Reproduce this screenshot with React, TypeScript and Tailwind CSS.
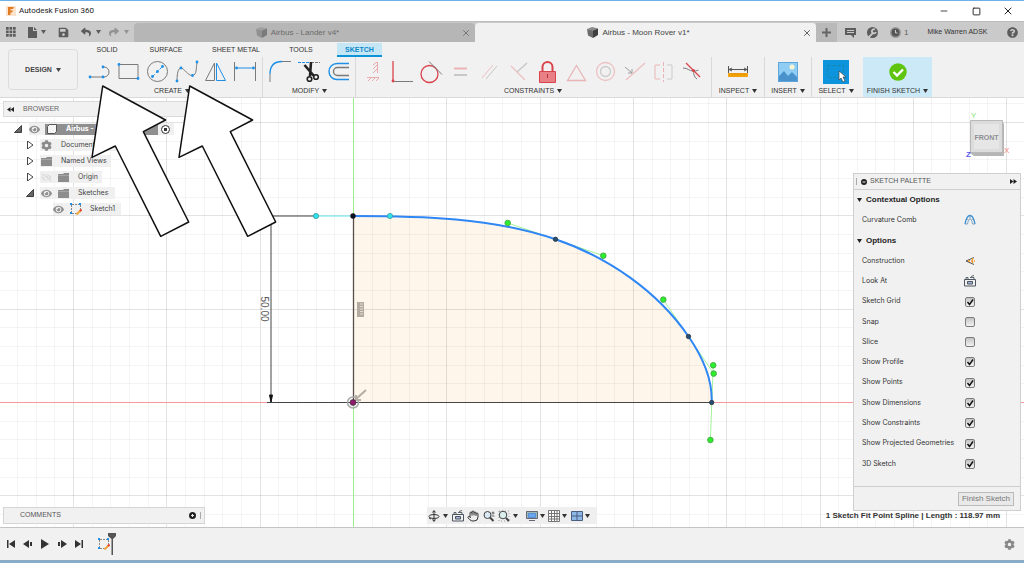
import type { ReactNode } from "react";
import { Hand, Minus, Square, X } from "lucide-react";
import { FaCog, FaEye, FaEyeSlash, FaQuestionCircle, FaReply, FaSave, FaShare } from "react-icons/fa";
import { clsx } from "clsx";

const MINOR = 18.66;
const ORIGIN = { x: 353, y: 402 };

const range = (from: number, to: number) => Array.from({ length: to - from + 1 }, (_, i) => from + i);

function Caret({ className }: { className?: string }) {
    return (
        <svg viewBox="0 0 5 4" className={clsx("w-[5px] h-1 shrink-0", className)} fill="currentColor">
            <path d="M0 0h5L2.500 4z" />
        </svg>
    );
}

function CubeIcon({ className }: { className?: string }) {
    return (
        <svg viewBox="0 0 11 11" className={clsx("w-[11px] h-[11px] shrink-0", className)}>
            <path d="M0 2l5-2 6 1.500-5 2z" fill="#8a8a8a" />
            <path d="M0 2l6 1.500V11L1 8.500z" fill="#6c6c6c" />
            <path d="M6 3.500l5-2V8l-5 3z" fill="#3f3f3f" />
        </svg>
    );
}

function TitleBar() {
    return (
        <header className="flex h-[21px] items-center border-t border-[#6fb1e6] bg-white text-[#222]">
            <svg viewBox="0 0 10 10" className="ml-[6px] h-[10px] w-[10px]">
                <path d="M0 0h10v10H0z" fill="#fbe3cd" />
                <path d="M2 1h6l-1 2H4.500v1.500H7L6 6.500H4.500V9H2z" fill="#e07b22" />
            </svg>
            <h1 className="ml-[3px] flex-1 font-['Roboto',sans-serif] text-[8px]">Autodesk Fusion 360</h1>
            <button aria-label="Minimize" className="flex w-8 justify-center"><Minus className="h-[10px] w-[10px]" /></button>
            <button aria-label="Maximize" className="flex w-8 justify-center"><Square className="h-[9px] w-[9px]" strokeWidth={2.5} /></button>
            <button aria-label="Close" className="flex w-8 justify-center"><X className="h-3 w-3" /></button>
        </header>
    );
}

function DocTab({ title, active }: { title: string; active?: boolean }) {
    return (
        <div className={clsx("flex h-[19px] flex-1 items-center rounded-t-sm pr-[4px] text-[8px]", active ? "bg-[#f1f1f1] text-[#444]" : "bg-[#b6b6b6] text-[#6b6b6b]")}>
            <button className="flex flex-1 items-center justify-center gap-1">
                <CubeIcon className={active ? "" : "opacity-50"} />
                {title}
            </button>
            <button aria-label={`Close ${title}`}><X className="h-[10px] w-[10px]" /></button>
        </div>
    );
}

function TabBar() {
    return (
        <div className="flex h-[21px] items-end border-t border-[#bdbdbd] bg-[#cacaca] text-[#5c5c5c]">
            <div className="flex h-full w-[134px] items-center pl-[6px]">
                <button aria-label="Data panel">
                    <svg viewBox="0 0 10 10" className="h-[10px] w-[10px]" fill="currentColor">
                        {[0, 3.5, 7].map((y) => [0, 3.5, 7].map((x) => <path key={`${x}-${y}`} d={`M${x} ${y}h2.700v2.700h-2.700z`} />))}
                    </svg>
                </button>
                <button aria-label="File" className="ml-3 flex items-center gap-1">
                    <svg viewBox="0 0 9 11" className="h-[11px] w-[9px]" fill="currentColor"><path d="M0 0h5v4h4v7H0zM6 0l3 3H6z" /></svg>
                    <Caret />
                </button>
                <button aria-label="Save" className="ml-3"><FaSave className="h-[11px] w-[11px]" /></button>
                <button aria-label="Undo" className="ml-3 flex items-center gap-[5px]"><FaReply className="h-[10px] w-[10px]" /><Caret /></button>
                <button aria-label="Redo" className="ml-[8px] flex items-center gap-[5px] text-[#939393]"><FaShare className="h-[10px] w-[10px]" /><Caret /></button>
            </div>
            <DocTab title="Airbus - Lander v4*" />
            <DocTab title="Airbus - Moon Rover v1*" active />
            <div className="flex h-[19px] w-[208px] items-center">
                <button aria-label="New design" className="flex h-full w-[21px] items-center justify-center bg-[#b9b9b9]">
                    <svg viewBox="0 0 9 9" className="h-[9px] w-[9px]" stroke="#666" strokeWidth="2"><path d="M4.500 0v9M0 4.500h9" /></svg>
                </button>
                <button aria-label="Messages" className="ml-2">
                    <svg viewBox="0 0 11 10" className="h-[10px] w-[11px]" fill="currentColor"><path d="M0 0h11v7H9v3L6 7H0zM2 2v1h7V2zM2 4v1h7V4z" fillRule="evenodd" /></svg>
                </button>
                <button aria-label="Extensions" className="ml-[11px]">
                    <svg viewBox="0 0 11 11" className="h-[11px] w-[11px]"><circle cx="5.500" cy="5.500" r="5.500" fill="#5c5c5c" /><path d="M1 11l5-5a2 2 0 0 1 2-3.500M6 6a2 2 0 0 0 3-1" stroke="#cacaca" strokeWidth="1.800" fill="none" /></svg>
                </button>
                <button className="ml-3 flex items-center gap-[3px] text-[8px]">
                    <svg viewBox="0 0 11 11" className="h-[11px] w-[11px]"><circle cx="5.500" cy="5.500" r="5.500" fill="#999" /><circle cx="5.500" cy="5.500" r="4" fill="#555" /><path d="M5.500 3v3h2" stroke="#ccc" fill="none" /></svg>
                    1
                </button>
                <button className="ml-[19px] flex-1 text-left text-[7px] text-[#333]">Mike Warren ADSK</button>
                <button aria-label="Help" className="mr-[6px]"><FaQuestionCircle className="h-[11px] w-[11px]" /></button>
            </div>
        </div>
    );
}

const BLUE = "#1e90e8";
const GRAY = "#7a7a7a";
const RED = "#d9444c";

function Dots({ at }: { at: number[][] }) {
    return <>{at.map(([x, y]) => <circle key={`${x}-${y}`} cx={x} cy={y} r="1.400" fill={BLUE} stroke="none" />)}</>;
}

const createTools: [string, ReactNode][] = [
    ["Line", <><path d="M5 17H19a5 5 0 0 0 0-10" stroke={GRAY} /><Dots at={[[5, 17], [18, 17], [18, 7]]} /></>],
    ["Rectangle", <><path d="M5 4.500h19v14H5z" stroke={GRAY} /><Dots at={[[5, 4.5], [24, 18.5]]} /></>],
    ["Circle", <><circle cx="14.500" cy="11.500" r="10" stroke={GRAY} /><path d="M9.500 16.500l10-10" stroke={BLUE} strokeDasharray="3 2" /><Dots at={[[9.5, 16.5], [14.5, 11.5], [19.5, 6.5]]} /></>],
    ["Fit point spline", <><path d="M5 21C5 14 6 8 9 8s7 8 11.500 7.500S24 8 25 2" stroke={GRAY} /><Dots at={[[5, 21], [9, 8], [20.5, 15.5], [25, 2]]} /></>],
    ["Mirror", <><path d="M4.500 20.500L13.500 3v17.500z" stroke={GRAY} /><path d="M15.500 3v17.500h9z" stroke={BLUE} /></>],
    ["Sketch dimension", <><path d="M4.500 2v19M25.500 2v19" stroke={GRAY} /><path d="M6 8h18" stroke={BLUE} /><Dots at={[[6.5, 8], [23.5, 8]]} /></>],
];

const modifyTools: [string, ReactNode][] = [
    ["Fillet", <><path d="M4 22v-8M16 1.500h9" stroke={GRAY} /><path d="M4 14C4 6 8 1.500 16 1.500" stroke={BLUE} strokeWidth="1.300" /></>],
    ["Trim", <><path d="M3 2.500h11" stroke={BLUE} strokeDasharray="3 1" /><path d="M16 2.500h9" stroke={GRAY} strokeDasharray="3 1" /><path d="M9.500 5l9.500 11M16 2l-1 14" stroke="#222" strokeWidth="2.600" /><circle cx="14.500" cy="19" r="2.300" stroke="#222" strokeWidth="1.600" /><circle cx="21" cy="17" r="2.300" stroke="#222" strokeWidth="1.600" /></>],
    ["Offset", <><path d="M25 3.500H13a8 8 0 0 0 0 16h12" stroke={BLUE} strokeWidth="1.400" /><path d="M25 7.500H13.500a4 4 0 0 0 0 8H25" stroke={GRAY} strokeWidth="1.400" /></>],
];

const constraintTools: [string, ReactNode][] = [
    ["Horizontal/Vertical", <g opacity=".4"><path d="M18.500 2v11M8 17.500h12" stroke={RED} /><path d="M14 5l4-3M14 9l4-4M14 13l4-4" stroke={RED} /><path d="M9 21l3-3M13 21l3-3M17 21l3-3" stroke={RED} /></g>],
    ["Coincident", <><path d="M5 1v20" stroke={RED} strokeWidth="1.300" /><path d="M5 21.500h20" stroke={GRAY} /><circle cx="5" cy="21" r="1.400" fill={RED} /></>],
    ["Tangent", <><circle cx="12.500" cy="14" r="8.500" stroke={RED} strokeWidth="1.300" /><path d="M12 1.500l13 13" stroke={GRAY} /></>],
    ["Equal", <g strokeWidth="2"><path d="M8 8.500h13" stroke="#eab4b6" /><path d="M8 15h13" stroke="#c8c8c8" /></g>],
    ["Parallel", <><path d="M7 18L18 5" stroke="#ecc0c2" /><path d="M11 19L22 6" stroke="#c6c6c6" /></>],
    ["Perpendicular", <><path d="M7 6l14 14" stroke="#ecc0c2" strokeWidth="1.300" /><path d="M23 3L13 12" stroke="#c6c6c6" strokeWidth="1.300" /></>],
    ["Fix/Unfix", <><path d="M9.500 11V7a5 5 0 0 1 10 0v4" stroke={RED} strokeWidth="2" /><path d="M6.500 11.500h16v11h-16z" fill="#e98085" stroke={RED} /><path d="M14.500 14v4" stroke="#b8323a" /></>],
    ["Midpoint", <path d="M14.500 5.500l9 15h-18z" stroke="#e9b5b7" strokeWidth="1.300" />],
    ["Concentric", <><circle cx="14.500" cy="11.500" r="9" stroke="#ecc0c2" strokeWidth="1.300" /><circle cx="14.500" cy="11.500" r="5" stroke="#cbcbcb" strokeWidth="1.300" /></>],
    ["Collinear", <><path d="M6 20L25 3" stroke="#ecc0c2" strokeWidth="1.300" /><path d="M5 7l7 6M8 13h4V9" stroke="#9c9c9c" /></>],
    ["Symmetry", <><path d="M11 5H6v14h5" stroke="#e9b5b7" /><path d="M18 5h5v14h-5" stroke="#cbcbcb" /><path d="M14.500 2v20" stroke="#eab4b6" strokeDasharray="4 2" /></>],
    ["Curvature", <><path d="M8 3l14 14" stroke={RED} strokeWidth="1.300" /><path d="M5 8c5 0 6 3 10 3s6-1 5-1M16 10c-1 3 0 7 3 9" stroke={GRAY} /><circle cx="15.500" cy="10.500" r="1.500" fill={RED} /></>],
];

function ToolIcons({ tools }: { tools: [string, ReactNode][] }) {
    return (
        <div className="flex">
            {tools.map(([name, art]) => (
                <button key={name} aria-label={name} className="h-6 w-[29px]">
                    <svg viewBox="0 0 29 24" className="h-6 w-[29px]" fill="none">{art}</svg>
                </button>
            ))}
        </div>
    );
}

function ToolGroup({ label, className, children }: { label: string; className: string; children: ReactNode }) {
    return (
        <div className={clsx("flex flex-col items-center pt-[3px]", className)}>
            {children}
            <button className="mt-[2px] flex h-[10px] items-center gap-[3px] whitespace-nowrap">{label}<Caret /></button>
        </div>
    );
}

function Ribbon() {
    return (
        <div className="flex border-b border-[#d9d9d9] bg-[#f1f1f1] text-[7px] text-[#333]">
            <button className="my-[7px] ml-2 flex h-[41px] w-[70px] items-center justify-center gap-1 rounded-sm border border-[#dcdcdc] pt-px font-bold text-[#444]">
                DESIGN <Caret />
            </button>
            <div className="ml-[7px] flex-1">
                <nav className="flex h-[15px] items-stretch text-center text-[#333]">
                    <button className="w-11 pt-[2px]">SOLID</button>
                    <button className="ml-[10px] w-[54px] pt-[2px]">SURFACE</button>
                    <button className="ml-[10px] w-[66px] pt-[2px]">SHEET METAL</button>
                    <button className="ml-2 w-12 pt-[2px]">TOOLS</button>
                    <button className="mt-px ml-[12px] w-[45px] border-b-2 border-[#0b94d8] bg-[#c5e6f5] pt-[2px] font-bold text-[#0b86c8]">SKETCH</button>
                </nav>
                <div className="flex h-10">
                    <ToolGroup label="CREATE" className="pr-[3px]"><ToolIcons tools={createTools} /></ToolGroup>
                    <ToolGroup label="MODIFY" className="border-l border-[#dadada] pr-[2px] pl-[3px]"><ToolIcons tools={modifyTools} /></ToolGroup>
                    <ToolGroup label="CONSTRAINTS" className="border-l border-[#dadada] pr-[4px] pl-[3px]"><ToolIcons tools={constraintTools} /></ToolGroup>
                    <ToolGroup label="INSPECT" className="w-[53px] border-l border-[#dadada]">
                        <svg viewBox="0 0 20 24" className="h-6 w-5" fill="none" stroke="#555">
                            <path d="M.5 6v7M19.500 6v7M1 9.500h18M4 8L1 9.500 4 11M16 8l3 1.500-3 1.500" />
                            <path d="M.5 13.500h19v3H.5z" fill="#f5a300" stroke="#f0a010" />
                            <path d="M4 13v2M7 13v2M10 13v2M13 13v2M16 13v2" stroke="#d98e00" />
                        </svg>
                    </ToolGroup>
                    <ToolGroup label="INSERT" className="w-[47px] border-l border-[#dadada]">
                        <svg viewBox="0 0 20 24" className="h-6 w-5">
                            <path d="M0 2h20v20H0z" fill="#8fcdf5" />
                            <path d="M0 17l6-6 4 5 4-4 6 6v4H0z" fill="#4a92cc" />
                            <circle cx="14" cy="7" r="2.500" fill="#fdf6d4" />
                            <path d="M.5 2.500h19v19H.5z" fill="none" stroke="#5fa6da" />
                        </svg>
                    </ToolGroup>
                    <ToolGroup label="SELECT" className="w-[52px] border-l border-[#dadada] pr-[3px]">
                        <svg viewBox="0 0 26 24" className="h-6 w-[26px]">
                            <path d="M0 0h26v24H0z" fill="#0d94dc" />
                            <path d="M4.500 5.500h16v12h-16z" fill="none" stroke="#1687a9" strokeDasharray="3 2" />
                            <path d="M16 11v9l2-2 2 4 2-1-2-4h3z" fill="#fff" stroke="#444" strokeWidth=".7" />
                        </svg>
                    </ToolGroup>
                    <ToolGroup label="FINISH SKETCH" className="w-[69px] bg-[#cbe9f6]">
                        <svg viewBox="0 0 18 24" className="h-6 w-[18px]">
                            <circle cx="9" cy="12" r="8.700" fill="#5ec40e" />
                            <path d="M4.500 12l3.500 3.500 6-6" fill="none" stroke="#fff" strokeWidth="2.400" />
                        </svg>
                    </ToolGroup>
                </div>
            </div>
        </div>
    );
}

const knots = [[555.5, 239.3], [688.5, 336.5], [711.7, 402.5]];
const handles = [[507.7, 223], [603.3, 255.7], [663.3, 299.6], [713.2, 365.3], [713.7, 373.6], [710.4, 440]];
const spline = "M353 216C421 216 491.700 217.600 555.500 239.300C607.500 257 657.300 290.800 688.500 336.500C702 356 712.600 378.500 711.700 402.500";

function SketchCanvas() {
    return (
        <svg viewBox="0 98 1024 429" preserveAspectRatio="xMidYMid slice" className="absolute inset-0 h-full w-full" fill="none">
            <path d={`${spline}H353z`} fill="#fef6ea" />
            <g stroke="#000">
                {range(-18, 35).filter((i) => i !== 0).map((i) => {
                    const x = Math.round(ORIGIN.x + i * MINOR) + 0.5;
                    return <path key={i} d={`M${x} 98V527`} opacity={i % 5 === 0 ? 0.11 : 0.045} />;
                })}
                {range(-16, 6).map((i) => {
                    const y = Math.round(ORIGIN.y + i * MINOR) + 0.5;
                    return <path key={i} d={`M0 ${y}H1024`} opacity={i % 5 === 0 ? 0.11 : 0.045} />;
                })}
            </g>
            <path d="M353.500 98V527" stroke="#9bf08c" />
            <path d="M0 402.500H1024" stroke="#f29a9a" />
            <path d="M353.500 216V402" stroke="#5a4c4a" strokeWidth="1.300" />
            <path d="M267 402.500H712M272 216H316M271 216V402" stroke="#444" />
            <path d="M269.500 395h3l-1.500 7z" fill="#111" stroke="#111" />
            <path d="M316 216H353" stroke="#62e8ee" />
            <text transform="translate(261 309) rotate(90)" textAnchor="middle" className="fill-[#555] text-[10px]">50.00</text>
            <g stroke="#a2f29a">
                <path d="M507.700 223L603.300 255.700M663.300 299.600L713.700 373.600M713.200 365.300L710.400 440" />
            </g>
            <path d={spline} stroke="#2f86f5" strokeWidth="2" />
            {handles.map(([x, y]) => <circle key={y} cx={x} cy={y} r="2.800" fill="#2df02d" stroke="#3f9c3f" strokeWidth=".8" />)}
            {knots.map(([x, y]) => <circle key={y} cx={x} cy={y} r="2.200" fill="#1f4f7a" stroke="#333" strokeWidth=".8" />)}
            {[316, 390].map((x) => <circle key={x} cx={x} cy="216" r="2.600" fill="#2fe3ec" stroke="#3a98a0" strokeWidth=".8" />)}
            <circle cx="353" cy="216" r="2.700" fill="#0b1220" />
            <path d="M357 302h7v15h-7z" fill="#b3aaa0" />
            <path d="M360 304h3M360 306.500h3M360 309h3M360 311.500h3M360 314h3" stroke="#e4dccf" />
            <circle cx="353" cy="402.500" r="5.500" stroke="#aaa" strokeWidth="1.500" />
            <path d="M356 399l10-9M356 395v5h5" stroke="#b3ada5" strokeWidth="2" />
            <circle cx="353" cy="402.500" r="3" fill="#8c1c6c" stroke="#333" strokeWidth=".6" />
        </svg>
    );
}

function Twisty({ open }: { open?: boolean }) {
    return (
        <svg viewBox="0 0 8 8" className="h-2 w-2 shrink-0" stroke="#333" strokeWidth=".9">
            {open ? <path d="M7.500.5v7H.5z" fill="#666" /> : <path d="M1.500 0l5.500 4-5.500 4z" fill="#fff" />}
        </svg>
    );
}

function FolderIcon() {
    return <svg viewBox="0 0 11 9" className="h-[9px] w-[11px] shrink-0" fill="#8d8d8d"><path d="M0 1h5l1-1h5v9H0z" /><path d="M0 2.500h11" stroke="#b5b5b5" strokeWidth=".6" /></svg>;
}

function SketchIcon() {
    return (
        <svg viewBox="0 0 12 12" className="h-3 w-3 shrink-0" fill="none">
            <path d="M2 1.500h8M1.500 2v8M10.500 2v4M2 10.500h5" stroke="#888" strokeDasharray="2 1" />
            <path d="M0 0h2v2H0zM9 0h2v2H9zM0 9h2v2H0z" fill={BLUE} />
            <path d="M6.500 11.500l4-4" stroke="#f2a53a" strokeWidth="2" />
            <path d="M10 8l1.500-1.500" stroke="#e23c2e" strokeWidth="2" />
        </svg>
    );
}

const eye = <FaEye className="h-[11px] w-[11px] text-[#8f8f8f]" />;

function Browser() {
    return (
        <section className="font-['Inter',sans-serif] text-[7px] text-[#444]">
            <h2 className="flex h-4 items-center gap-[9px] border border-[#dadada] bg-[#f1f1f1] pl-[3px] font-['Liberation_Sans',sans-serif] text-[#666]">
                <svg viewBox="0 0 7 5" className="h-[5px] w-[7px]" fill="#222"><path d="M3.500 0v5L0 2.500zM7 0v5L3.500 2.500z" /></svg>
                BROWSER
            </h2>
            <ul className="pt-[4px]">
                <li className="flex h-4 items-center gap-[7px] pl-[11px]">
                    <Twisty open />
                    <div className="flex h-3 items-center gap-[5px] bg-[#f0f0f0] pr-1">
                        {eye}
                        <div className="flex h-[11px] w-[113px] items-center gap-[9px] bg-[#8f8f8f] pl-[2px] font-bold text-white">
                            <svg viewBox="0 0 10 10" className="h-[10px] w-[10px]"><path d="M.5 2.500l2-2h7v7l-2 2h-7z" fill="#f4f4f4" stroke="#555" /></svg>
                            Airbus - Moon Rover
                        </div>
                        <input type="radio" name="component" aria-label="Activate component" defaultChecked className="-ml-[2px] h-[9px] w-[9px] appearance-none rounded-full border border-[#333] bg-[radial-gradient(#333_35%,#fff_40%)]" />
                    </div>
                </li>
                <li className="flex h-4 items-center gap-[6px] pl-[23px]">
                    <Twisty />
                    <div className="flex h-3 items-center gap-[9px] bg-[#f0f0f0] pr-1 pl-[1px]"><FaCog className="h-[11px] w-[11px] text-[#8a8a8a]" />Document Settings</div>
                </li>
                <li className="flex h-4 items-center gap-[6px] pl-[23px]">
                    <Twisty />
                    <div className="flex h-3 items-center gap-[9px] bg-[#f0f0f0] pr-1 pl-[1px]"><FolderIcon />Named Views</div>
                </li>
                <li className="flex h-4 items-center gap-[6px] pl-[23px]">
                    <Twisty />
                    <div className="flex h-3 items-center gap-[6px] bg-[#f0f0f0] pr-1 pl-[1px]"><FaEyeSlash className="h-[11px] w-[11px] text-[#dcdcdc]" /><FolderIcon /><span className="ml-[3px]">Origin</span></div>
                </li>
                <li className="flex h-4 items-center gap-[6px] pl-[23px]">
                    <Twisty open />
                    <div className="flex h-3 items-center gap-[6px] bg-[#f0f0f0] pr-[7px] pl-[1px]">{eye}<FolderIcon /><span className="ml-[3px]">Sketches</span></div>
                </li>
                <li className="flex h-4 items-center pl-[50px]">
                    <div className="flex h-3 items-center gap-[6px] bg-[#f0f0f0] pr-[6px]">{eye}<SketchIcon /><span className="ml-[2px]">Sketch1</span></div>
                </li>
            </ul>
        </section>
    );
}

function LookAtIcon() {
    return (
        <svg viewBox="0 0 12 12" className="h-3 w-3" fill="none" stroke="#4d5560">
            <path d="M.5 4.500h11v6.500H.5z" />
            <path d="M2 4V2.500h2V4M6 2.500h4V4M7 1.500l3-1" strokeWidth=".9" />
            <path d="M3.500 6.500h5v2.500h-5z" fill="#9fb4d4" />
        </svg>
    );
}

function NavBar() {
    return (
        <div className="mb-[3px] flex h-[17px] w-[170px] items-center justify-between self-end bg-[#efefef] pr-[7px] pl-[1px] text-[#333]">
            <button aria-label="Orbit" className="flex items-center gap-[3px]">
                <svg viewBox="0 0 12 12" className="h-3 w-3" fill="none" stroke="#333"><ellipse cx="6" cy="6.500" rx="5" ry="2" /><path d="M6 1v10M4.500 2.500L6 .5l1.500 2M4.500 9.500L6 11.500l1.500-2M1 8l2 1" /></svg>
                <Caret />
            </button>
            <button aria-label="Look at"><LookAtIcon /></button>
            <button aria-label="Pan"><Hand className="h-3 w-3" /></button>
            <button aria-label="Zoom">
                <svg viewBox="0 0 12 12" className="h-3 w-3" fill="none" stroke="#444"><circle cx="4.500" cy="5" r="3.500" fill="#dbe9f4" /><path d="M7 7.500l3.500 3.500" strokeWidth="2" /><path d="M8.500 3h3M10 1.500v3M8.500 6h3" strokeWidth=".8" /></svg>
            </button>
            <button aria-label="Zoom window" className="flex items-center gap-[3px]">
                <svg viewBox="0 0 12 12" className="h-3 w-3" fill="none" stroke="#444"><path d="M1 1h10v10H1z" strokeDasharray="1 2" stroke="#999" /><circle cx="5" cy="5" r="3.800" fill="#dbeeee" /><path d="M8 8l3 3" strokeWidth="2" /></svg>
                <Caret />
            </button>
            <button aria-label="Display settings" className="ml-1 flex items-center gap-[2px]">
                <svg viewBox="0 0 12 12" className="h-3 w-3" stroke="#667"><path d="M.5 1.500h11v7H.5z" fill="#9bb" /><path d="M2.500 3.500h7v4h-7z" fill="#6ba6f0" stroke="#5b8bd0" /><path d="M3 10.500h6" /></svg>
                <Caret />
            </button>
            <button aria-label="Grid and snaps" className="flex items-center gap-[2px]">
                <svg viewBox="0 0 12 12" className="h-3 w-3" fill="#fff" stroke="#777"><path d="M.5.5h11v11H.5zM.5 3.500h11M.5 6.500h11M.5 9h11M3.500.5v11M6.500.5v11M9 .5v11" /></svg>
                <Caret />
            </button>
            <button aria-label="Viewports" className="flex items-center gap-[2px]">
                <svg viewBox="0 0 12 12" className="h-3 w-3" fill="#8fb8ea" stroke="#4b5f7c"><path d="M.5 1.500h11v9H.5zM6 1.500v9M.5 6h11" /></svg>
                <Caret />
            </button>
        </div>
    );
}

const toggles: [string, boolean][] = [
    ["Sketch Grid", true],
    ["Snap", false],
    ["Slice", false],
    ["Show Profile", true],
    ["Show Points", true],
    ["Show Dimensions", true],
    ["Show Constraints", true],
    ["Show Projected Geometries", true],
    ["3D Sketch", true],
];

function PaletteRow({ label, children }: { label: string; children: ReactNode }) {
    return (
        <label className="flex flex-1 items-center justify-between pr-[44px] pl-2">
            {label}
            {children}
        </label>
    );
}

function PaletteSection({ title }: { title: string }) {
    return (
        <h3 className="flex flex-1 items-center gap-[4px] pl-[3px] font-['Liberation_Sans',sans-serif] text-[8px] text-[#222]">
            <Caret />
            <span className="font-bold">{title}</span>
        </h3>
    );
}

function SketchPalette() {
    return (
        <section className="w-[168px] border border-[#cfcfcf] bg-[#f1f1f1] font-['Inter',sans-serif] text-[7px] text-[#333]">
            <h2 className="flex h-4 items-center border-b border-[#cfcfcf] pr-[3px] pl-[2px] font-['Liberation_Sans',sans-serif] text-[#555]">
                <span className="h-[7px] w-[2px] border-l border-[#aaa]" />
                <svg viewBox="0 0 6 6" className="ml-[3px] h-[6px] w-[6px]"><circle cx="3" cy="3" r="3" fill="#222" /><path d="M1.500 3h3" stroke="#eee" /></svg>
                <span className="ml-[3px] flex-1">SKETCH PALETTE</span>
                <svg viewBox="0 0 7 5" className="h-[5px] w-[7px]" fill="#222"><path d="M0 0v5l3.500-2.500zM3.500 0v5L7 2.500z" /></svg>
            </h2>
            <div className="flex h-[284px] flex-col">
                <PaletteSection title="Contextual Options" />
                <PaletteRow label="Curvature Comb">
                    <button aria-label="Curvature comb">
                        <svg viewBox="0 0 12 12" className="h-3 w-3" fill="none"><path d="M1 10C2 5 3 1.500 6 1.500S10 5 11 10" stroke="#3b8fd0" strokeWidth="1.300" /><path d="M3.500 10C4 7 5 5 6 5s2 2 2.500 5M1 10h2.500M8.500 10H11M3 4.500l1.500 2M9 4.500L7.500 6.500M6 1.500V5" stroke="#6c93b4" strokeWidth=".8" /></svg>
                    </button>
                </PaletteRow>
                <PaletteSection title="Options" />
                <PaletteRow label="Construction">
                    <button aria-label="Construction">
                        <svg viewBox="0 0 12 12" className="h-3 w-3" fill="none"><path d="M10 2.500L2 6l8 3.500" stroke="#555" /><path d="M4 6h7M8.500 3v6" stroke="#f29222" strokeWidth="1.300" strokeDasharray="2 1" /></svg>
                    </button>
                </PaletteRow>
                <PaletteRow label="Look At"><button aria-label="Look at"><LookAtIcon /></button></PaletteRow>
                {toggles.map(([label, on]) => (
                    <PaletteRow key={label} label={label}>
                        <span className="mr-[1px] grid">
                            <input type="checkbox" defaultChecked={on} className="peer h-[10px] w-[10px] appearance-none rounded-[2px] border border-[#7b7b7b] bg-gradient-to-b from-[#c4c4c4] to-[#f2f2f2] [grid-area:1/1]" />
                            <svg viewBox="0 0 10 10" className="pointer-events-none hidden h-[10px] w-[10px] peer-checked:block [grid-area:1/1]" fill="none"><path d="M2.500 5l2 2.500 3.500-5" stroke="#111" strokeWidth="1.400" /></svg>
                        </span>
                    </PaletteRow>
                ))}
            </div>
            <div className="mt-[12px] flex h-6 items-center justify-end border-t border-[#cfcfcf] pr-[6px]">
                <button className="h-[14px] w-[56px] border border-[#bbb] bg-[#e9e9e9] font-['Liberation_Sans',sans-serif] text-[8px] leading-3 whitespace-nowrap text-[#777]">Finish Sketch</button>
            </div>
        </section>
    );
}

function ViewCube() {
    return (
        <svg viewBox="0 0 50 50" className="mt-[11px] mr-[11px] h-[50px] w-[50px]">
            <path d="M10 12h32l2 3v32H14l-4-3z" fill="#b5b5b5" />
            <path d="M10.500 11.500h32v32h-32z" fill="#dcdcdc" stroke="#b8b8b8" />
            <path d="M14 15h25v25H14z" fill="#e6e6e6" />
            <text x="26.500" y="31" textAnchor="middle" className="fill-[#8b8f94] text-[7px] font-bold">FRONT</text>
            <text x="11" y="9" className="fill-[#7be67b] text-[8px]">Y</text>
            <text x="44" y="44" className="fill-[#f07a7a] text-[8px]">X</text>
            <text x="6" y="48" className="fill-[#5a5af0] text-[8px] font-bold">Z</text>
        </svg>
    );
}

function Workspace() {
    return (
        <main className="relative flex flex-1 bg-white">
            <SketchCanvas />
            <div className="relative grid flex-1 grid-cols-[1fr_auto_1fr]">
                <div className="ml-[3px] flex w-[202px] flex-col justify-between pt-[3px] pb-[3px]">
                    <Browser />
                    <section className="flex h-[17px] items-center justify-between border border-[#d5d5d5] bg-[#f1f1f1] pr-[2px] pl-4 text-[7px] text-[#555]">
                        <h2>COMMENTS</h2>
                        <button aria-label="Add comment" className="flex items-center gap-1">
                            <svg viewBox="0 0 7 7" className="h-[7px] w-[7px]"><circle cx="3.500" cy="3.500" r="3.500" fill="#222" /><path d="M3.500 2v3M2 3.500h3" stroke="#eee" /></svg>
                            <span className="h-[7px] w-[2px] border-l border-[#aaa]" />
                        </button>
                    </section>
                </div>
                <NavBar />
                <div className="flex flex-col items-end pr-[3px]">
                    <ViewCube />
                    <div className="mt-[14px]"><SketchPalette /></div>
                    <p className="pr-[21px] font-['Liberation_Sans',sans-serif] text-[8px] leading-[9px] font-bold text-[#333]">1 Sketch Fit Point Spline | Length : 118.97 mm</p>
                </div>
            </div>
        </main>
    );
}

const transport: [string, string][] = [
    ["Go to start", "M1 1h1.500v8H1zM9 1v8L3 5z"],
    ["Step back", "M6 1v8L0 5zM7 3h2v4H7z"],
    ["Play", "M1 0l8 5-8 5z"],
    ["Step forward", "M4 1v8l6-4zM1 3h2v4H1z"],
    ["Go to end", "M1 1v8l6-4zM7.500 1H9v8H7.500z"],
];

function Timeline() {
    return (
        <footer className="flex h-9 items-center border-t border-b-[3px] border-t-[#c4c4c4] border-b-[#88abc6] bg-[#f1f1f1] pr-[9px] pl-[6px]">
            <div className="flex gap-[7px]">
                {transport.map(([name, d]) => (
                    <button key={name} aria-label={name}>
                        <svg viewBox="0 0 10 10" className="h-[10px] w-[10px]" fill="#333"><path d={d} /></svg>
                    </button>
                ))}
            </div>
            <button aria-label="Sketch1" className="ml-[14px] flex items-center">
                <SketchIcon />
                <svg viewBox="0 0 8 22" className="-ml-[2px] h-[22px] w-2" fill="#555"><path d="M0 0h8v3L5 6v16H3.500V6L0 3z" /></svg>
            </button>
            <button aria-label="Timeline settings" className="ml-auto"><FaCog className="h-[11px] w-[11px] text-[#888]" /></button>
        </footer>
    );
}

const ARROW = "M14.700 2L77.600 36 55.300 47.700 100.700 138 72.700 152.300 27.300 62 4 73.300z";

function CalloutArrows() {
    return (
        <svg viewBox="0 0 190 156" className="pointer-events-none absolute top-[84px] left-[88px] h-[156px] w-[190px]" fill="#fff" stroke="#111" strokeWidth="1.500" strokeLinejoin="round">
            <path d={ARROW} />
            <path d={ARROW} transform="translate(87 0)" />
        </svg>
    );
}

export default function App() {
    return (
        <div className="relative flex min-h-screen flex-col overflow-hidden bg-[#f1f1f1] font-['Liberation_Sans',Arial,sans-serif]">
            <TitleBar />
            <TabBar />
            <Ribbon />
            <Workspace />
            <Timeline />
            <CalloutArrows />
        </div>
    );
}
